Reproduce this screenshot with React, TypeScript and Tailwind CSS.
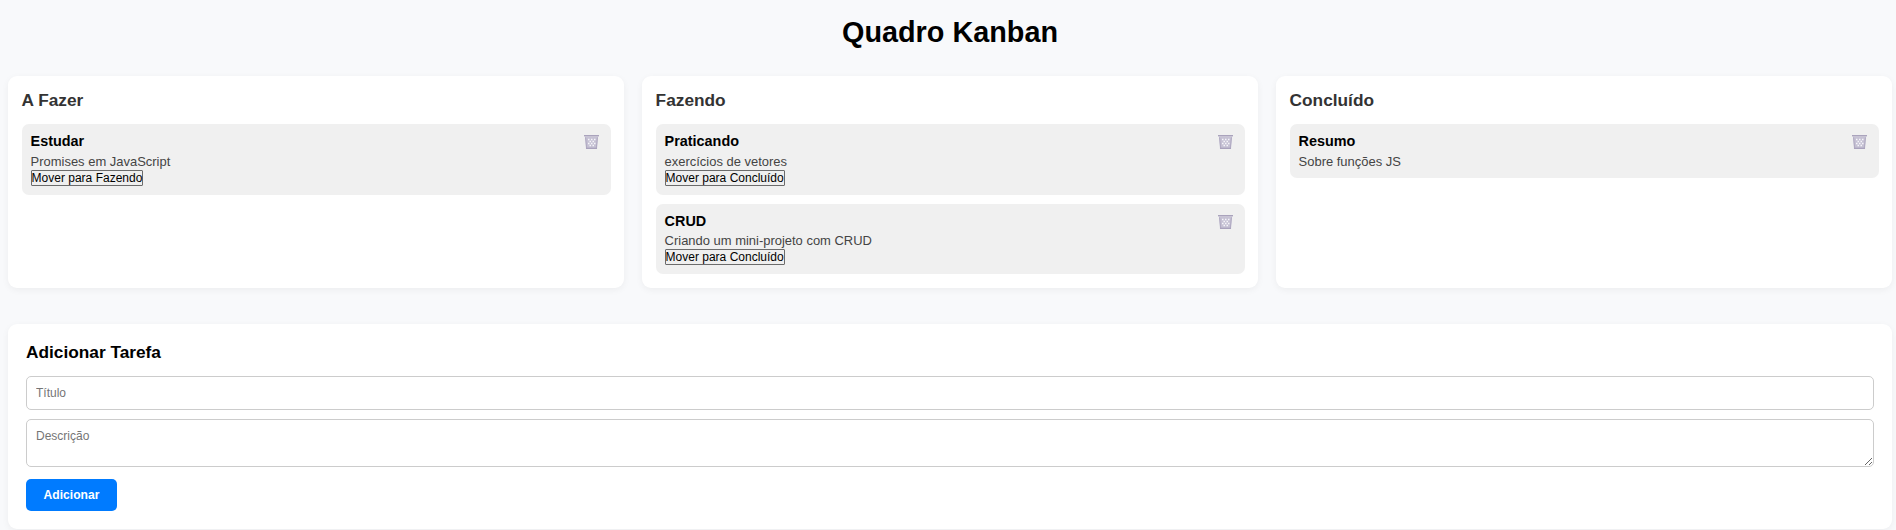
type Task = { title: string; description: string };
type Column = { name: string; next?: string; tasks: Task[] };

const columns: Column[] = [
  { name: "A Fazer", next: "Fazendo", tasks: [{ title: "Estudar", description: "Promises em JavaScript" }] },
  {
    name: "Fazendo",
    next: "Concluído",
    tasks: [
      { title: "Praticando", description: "exercícios de vetores" },
      { title: "CRUD", description: "Criando um mini-projeto com CRUD" },
    ],
  },
  { name: "Concluído", tasks: [{ title: "Resumo", description: "Sobre funções JS" }] },
];

function Basket() {
  return (
    <svg width="15" height="15" viewBox="0 0 15 15" fill="none">
      <path d="M1 1.500h13l-1 12.500H2z" fill="#c5c0d3" />
      <path
        d="M4 4.500h1.500M7 4.500h1.500M10 4.500h1.500M5.500 6.500H7M8.500 6.500H10M4 8.500h1.500M7 8.500h1.500M10 8.500h1.500M5.500 10.500H7M8.500 10.500H10"
        stroke="#f6f5f9"
        strokeWidth="1.300"
      />
      <path d="M1.500 2l1.200 11M13.500 2l-1.200 11" stroke="#b0aac2" strokeWidth="1" />
      <path d="M0 0h15v1.400H0z" fill="#aaa3bc" />
      <path d="M1 1.400h13v1H1z" fill="#c9c5d6" />
      <path d="M2 12.700h11V14H2z" fill="#a9a2bd" />
    </svg>
  );
}

function TaskCard({ task, next }: { task: Task; next?: string }) {
  return (
    <article className="flex items-start justify-between rounded-[7px] bg-[#f0f0f0] p-[9px]">
      <div className="flex flex-col items-start">
        <h3 className="h-[19.8px] text-[14.4px] leading-[17px] font-bold text-black">{task.title}</h3>
        <p className="h-[16px] text-[12.96px] leading-[17px] text-[#444]">{task.description}</p>
        {next && (
          <button className="mt-px mb-[-0.2px] h-[16px] rounded-[1px] border border-[#6b6b6b] bg-[#efefef] text-[12px] leading-[14px] whitespace-nowrap text-black">
            Mover para {next}
          </button>
        )}
      </div>
      <button className="mt-[2px] mr-[3px]" aria-label="Excluir">
        <Basket />
      </button>
    </article>
  );
}

export default function App() {
  return (
    <main className="h-[530px] overflow-hidden bg-[#f8f9fb] pr-1 pl-2 font-['Liberation_Sans',Arial,sans-serif]">
      <h1 className="h-[76px] pt-[16px] text-center text-[28.8px] leading-[33px] font-bold text-black">Quadro Kanban</h1>
      <div className="grid h-[212px] grid-cols-3 gap-[18px]">
        {columns.map((column) => (
          <section key={column.name} className="rounded-[9px] bg-white pt-[14px] pr-[13px] pl-[13.6px] shadow-[0_2px_7px_rgba(0,0,0,0.05)]">
            <h2 className="h-[34px] text-[17.28px] leading-[20px] font-bold text-[#333]">{column.name}</h2>
            <div className="flex flex-col gap-[9px]">
              {column.tasks.map((task) => (
                <TaskCard key={task.title} task={task} next={column.next} />
              ))}
            </div>
          </section>
        ))}
      </div>
      <section className="mt-9 h-[205px] rounded-[9px] bg-white p-[18px] shadow-[0_2px_7px_rgba(0,0,0,0.05)]">
        <h2 className="h-[34px] text-[17.28px] leading-[20px] font-bold text-black">Adicionar Tarefa</h2>
        <form className="flex flex-col items-start" onSubmit={(e) => e.preventDefault()}>
          <input
            className="h-[34px] w-full rounded-[5px] border border-[#ccc] bg-white px-[9px] text-[12px] placeholder:text-[#757575]"
            placeholder="Título"
          />
          <textarea
            className="mt-[9px] h-[48px] w-full rounded-[5px] border border-[#ccc] bg-white p-[9px] text-[12px] leading-[14px] placeholder:text-[#757575]"
            placeholder="Descrição"
          />
          <button className="mt-3 h-[32px] w-[91px] rounded-[5px] bg-[#007bff] text-[12.1px] font-bold text-white">
            Adicionar
          </button>
        </form>
      </section>
    </main>
  );
}
